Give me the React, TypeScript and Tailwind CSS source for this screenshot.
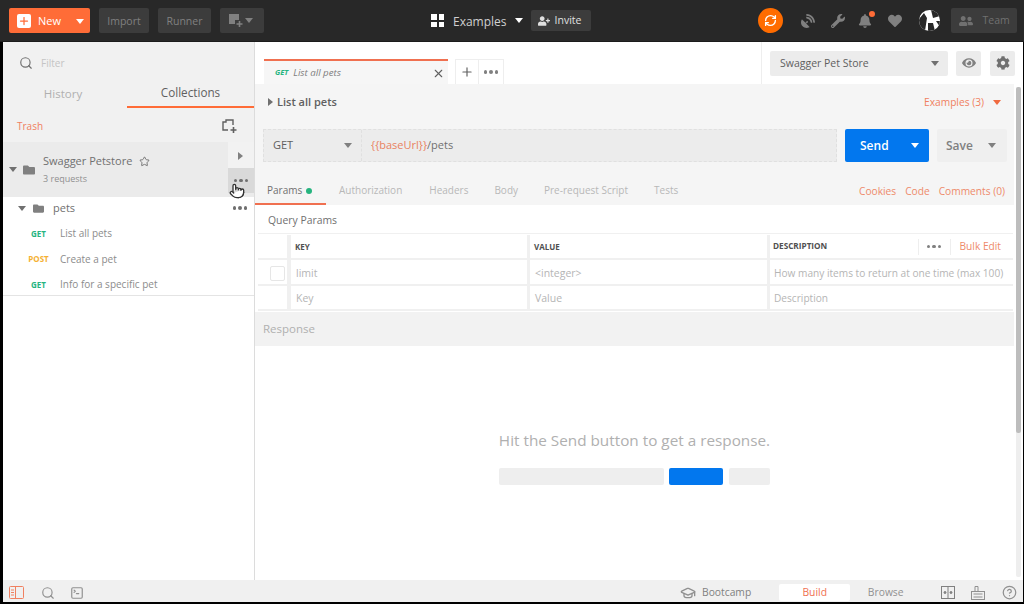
import React from "react";
import { Plus, Search, Star, X, Pointer, GraduationCap, CircleHelp, RefreshCw, SquareTerminal } from "lucide-react";
import { FaBell, FaCog, FaEye, FaFolder, FaHeart, FaSatelliteDish, FaUserFriends, FaUserPlus, FaWrench } from "react-icons/fa";

const Tri = ({ c = "border-t-white", dir = "down" }: { c?: string; dir?: string }) =>
  dir === "down" ? (
    <span className={`inline-block w-0 h-0 border-x-[4px] border-x-transparent border-t-[5px] ${c}`} />
  ) : (
    <span className={`inline-block w-0 h-0 border-y-[4px] border-y-transparent border-l-[5px] ${c}`} />
  );

const Dots = ({ c = "bg-[#707070]" }: { c?: string }) => (
  <span className="inline-flex gap-[2px]">
    <i className={`block w-[3.5px] h-[3.5px] rounded-full ${c}`} />
    <i className={`block w-[3.5px] h-[3.5px] rounded-full ${c}`} />
    <i className={`block w-[3.5px] h-[3.5px] rounded-full ${c}`} />
  </span>
);

const NewWin = ({ solid, cls }: { solid?: boolean; cls: string }) => (
  <svg width="16" height="15" viewBox="0 0 16 15" className={cls}>
    {solid ? (
      <path d="M1 1H11V7H7V11H1Z" fill="currentColor" />
    ) : (
      <path d="M6 11H1V3H4V1H11V6" fill="none" stroke="currentColor" strokeWidth="1.4" />
    )}
    <path d="M11.5 8V14M8.5 11H14.5" stroke="currentColor" strokeWidth="1.6" fill="none" />
  </svg>
);

const Req = ({ m, name, c }: { m: string; name: string; c: string }) => (
  <div className="flex items-center h-[25.5px]">
    <span className={`ml-[15px] w-[41px] text-center text-[8px] font-bold ${c}`}>{m}</span>
    <span className="ml-[1px] text-[10px] text-[#8c8c8c]">{name}</span>
  </div>
);

const Row = ({ k, v, d, pt, check, h }: { k: string; v: string; d: string; pt: string; check?: boolean; h: string }) => (
  <div className={`flex ${h} border-b-2 border-[#f0f0f0] text-[10.5px] text-[#b5b5b5]`}>
    <div className={`w-[33px] shrink-0 border-r-[4px] border-[#f0f0f0] flex items-center justify-center pl-[10px] ${pt}`}>
      {check && <span className="block w-[15px] h-[15px] rounded-[2px] border border-[#e6e6e6]" />}
    </div>
    <div className={`w-[239px] shrink-0 border-r-[3px] border-[#f0f0f0] pl-[5px] flex items-center ${pt}`}>{k}</div>
    <div className={`w-[240px] shrink-0 border-r-[3px] border-[#f0f0f0] pl-[5px] flex items-center ${pt}`}>{v}</div>
    <div className={`flex-1 pl-[4px] flex items-center whitespace-nowrap text-[10.15px] ${pt}`}>{d}</div>
  </div>
);

export default function App() {
  return (
    <div className="w-[1024px] h-[604px] overflow-hidden flex flex-col bg-black font-['Open_Sans',sans-serif]">
      {/* Header */}
      <header className="h-[42px] shrink-0 bg-[#282828] border-b border-[#1c1c1c] flex items-center pl-[9px]">
        <div className="w-[81px] h-[25px] rounded-[2px] bg-[#ff6c37] flex items-center pl-[8px] pt-[1px] text-[11px] text-white">
          <span className="w-[14px] h-[14px] bg-white rounded-[2px] flex items-center justify-center">
            <Plus size={12} strokeWidth={2.5} className="text-[#ff6c37]" />
          </span>
          <span className="ml-[7px]">New</span>
          <span className="ml-[15px] flex"><Tri /></span>
        </div>
        <div className="ml-[9px] w-[50px] h-[25px] pt-[2px] rounded-[2px] bg-[#3c3c3c] flex items-center justify-center text-[10.5px] text-[#808080]">Import</div>
        <div className="ml-[9px] w-[53px] h-[25px] pt-[2px] rounded-[2px] bg-[#3c3c3c] flex items-center justify-center text-[10.5px] text-[#808080]">Runner</div>
        <div className="ml-[9px] w-[44px] h-[25px] rounded-[2px] bg-[#3c3c3c] flex items-center pl-[8px] gap-[1px]">
          <NewWin solid cls="text-[#808080]" />
          <Tri c="border-t-[#808080]" />
        </div>
        <div className="ml-[167px] grid grid-cols-2 gap-[2px] w-[13px]">
          <i className="block h-[5.5px] bg-white" /><i className="block h-[5.5px] bg-white" />
          <i className="block h-[5.5px] bg-white" /><i className="block h-[5.5px] bg-white" />
        </div>
        <span className="ml-[9px] pt-[2px] text-[12px] text-[#d0d0d0]">Examples</span>
        <span className="ml-[8px] flex"><Tri /></span>
        <div className="ml-[8px] w-[60px] h-[21px] pt-[1px] rounded-[2px] bg-[#3c3c3c] flex items-center pl-[7px] gap-[5px] text-[10.5px] text-[#e0e0e0]">
          <FaUserPlus size={12} />Invite
        </div>
        <div className="ml-[167px] w-[25px] h-[25px] rounded-full bg-[#ff6c00] flex items-center justify-center">
          <RefreshCw size={13} strokeWidth={2.5} className="text-white" />
        </div>
        <FaSatelliteDish size={14} className="ml-[18px] text-[#808080]" />
        <FaWrench size={14} className="ml-[16px] text-[#808080]" />
        <span className="ml-[13px] relative flex">
          <FaBell size={14} className="text-[#808080]" />
          <i className="absolute -top-[3px] -right-[3px] w-[6px] h-[6px] rounded-full bg-[#ff6c37]" />
        </span>
        <FaHeart size={14} className="ml-[16px] text-[#808080]" />
        <span className="ml-[17px] w-[21px] h-[21px] rounded-full bg-white flex items-center justify-center overflow-hidden">
          <svg width="21" height="21" viewBox="0 0 21 21">
            <path d="M0 9 L5 3 L8 8 L6 21 L0 21Z M12 0 L14 8 L21 6 L21 0Z M9 13 L14 13 L16 21 L9 21Z M17 11 L21 11 L21 17Z" fill="#282828" />
          </svg>
        </span>
        <div className="ml-[11px] w-[66px] h-[25px] pt-[1px] rounded-[2px] bg-[#3c3c3c] flex items-center pl-[8px] gap-[10px] text-[10.5px] text-[#707070]">
          <FaUserFriends size={14} />Team
        </div>
      </header>

      <div className="flex-1 min-h-0 flex pl-[3px] pr-[1px] pb-[2px] bg-black">
        <div className="flex-1 min-w-0 flex flex-col bg-white">
          <div className="flex-1 min-h-0 flex">
            {/* Sidebar */}
            <aside className="w-[252px] shrink-0 bg-white border-r border-[#dcdcdc] flex flex-col">
              <div className="bg-[#f1f1f1] h-[100px] shrink-0">
                <div className="h-[36px] flex items-center pl-[16px] pt-[6px]">
                  <Search size={14} className="text-[#707070]" />
                  <span className="ml-[8px] text-[10px] text-[#c4c4c4]">Filter</span>
                </div>
                <div className="h-[30px] flex">
                  <div className="w-[124px] flex items-center justify-center text-[11.5px] text-[#b0b0b0] pr-[4px] pt-[1px]">History</div>
                  <div className="flex-1 flex items-center justify-center text-[11.7px] text-[#606060] border-b-2 border-[#ff6c37] pt-[1px]">Collections</div>
                </div>
                <div className="h-[34px] flex items-center justify-between pl-[14px] pr-[16px] pt-[2px]">
                  <span className="text-[10px] text-[#f08060]">Trash</span>
                  <NewWin cls="text-[#606060]" />
                </div>
              </div>
              <div className="h-[55px] shrink-0 bg-[#ebebeb] flex relative">
                <div className="flex-1 flex items-center">
                  <span className="ml-[6px] flex"><Tri c="border-t-[#707070]" /></span>
                  <FaFolder size={12} className="ml-[6px] text-[#808080]" />
                  <div className="ml-[8px]">
                    <div className="flex items-center text-[11px] text-[#707070] leading-[16px]">
                      Swagger Petstore
                      <Star size={11} className="ml-[7px] text-[#707070]" />
                    </div>
                    <div className="text-[9px] text-[#909090] mt-[3px]">3 requests</div>
                  </div>
                </div>
                <div className="w-[26px] flex flex-col">
                  <div className="h-[26px] bg-[#f2f2f2] flex items-center justify-center pr-[2px] pt-[1px]"><Tri dir="right" c="border-l-[#808080]" /></div>
                  <div className="h-[25px] bg-[#d9d9d9] flex items-center justify-center"><Dots /></div>
                </div>
                <Pointer size={16} className="absolute left-[226px] top-[41px] text-[#333] fill-white" />
              </div>
              <div className="h-[99px] shrink-0 border-b border-[#e4e4e4]">
                <div className="h-[24px] flex items-center pl-[15px] pr-[7px] pb-[2px]">
                  <Tri c="border-t-[#707070]" />
                  <FaFolder size={11} className="ml-[7px] text-[#808080]" />
                  <span className="ml-[9px] text-[11px] text-[#707070]">pets</span>
                  <span className="ml-auto flex"><Dots /></span>
                </div>
                <Req m="GET" name="List all pets" c="text-[#26b47f]" />
                <Req m="POST" name="Create a pet" c="text-[#f5b133]" />
                <Req m="GET" name="Info for a specific pet" c="text-[#26b47f]" />
              </div>
            </aside>

            {/* Main */}
            <main className="flex-1 min-w-0 flex flex-col">
              <div className="h-[42px] shrink-0 flex bg-white">
                <div className="flex-1 flex items-end pl-[9px]">
                  <div className="w-[184px] h-[25px] border-t-2 border-[#f07050] bg-[#f6f6f6] flex items-center pl-[11px] pr-[3px] pt-[1px] text-[9.7px] italic text-[#808080]">
                    <span className="font-bold text-[#26b47f] text-[7.5px] mr-[5px]">GET</span>List all pets
                    <X size={13} className="ml-auto not-italic text-[#606060]" />
                  </div>
                  <div className="ml-[7px] w-[24px] h-[25px] border border-b-0 border-[#eeeeee] flex items-center justify-center"><Plus size={14} className="text-[#606060]" /></div>
                  <div className="w-[25px] h-[25px] border border-l-0 border-b-0 border-[#eeeeee] flex items-center justify-center"><Dots c="bg-[#808080]" /></div>
                </div>
                <div className="w-[262px] border-l border-[#eeeeee] flex items-center pl-[8px]">
                  <div className="w-[178px] h-[25px] rounded-[2px] bg-[#ececec] flex items-center justify-between pl-[10px] pr-[9px] pt-[1px] text-[10.5px] text-[#606060]">
                    Swagger Pet Store<Tri c="border-t-[#707070]" />
                  </div>
                  <div className="ml-[8px] w-[25px] h-[25px] rounded-[2px] bg-[#ececec] flex items-center justify-center"><FaEye size={14} className="text-[#808080]" /></div>
                  <div className="ml-[9px] w-[25px] h-[25px] rounded-[2px] bg-[#ececec] flex items-center justify-center"><FaCog size={14} className="text-[#707070]" /></div>
                </div>
              </div>

              <div className="flex-1 min-h-0 flex">
                <div className="flex-1 min-w-0 flex flex-col">
                  <div className="h-[121px] shrink-0 bg-[#f5f5f5] flex flex-col">
                    <div className="h-[45px] shrink-0 flex items-start justify-between pl-[13px] pr-[13px] pt-[10px]">
                      <div className="flex items-center text-[11px] font-semibold text-[#606060]">
                        <Tri dir="right" c="border-l-[#707070]" />
                        <span className="ml-[4px]">List all pets</span>
                      </div>
                      <div className="flex items-center text-[10.2px] text-[#f08060] mt-[1px]">
                        Examples (3)<span className="ml-[9px] flex"><Tri c="border-t-[#f06a40]" /></span>
                      </div>
                    </div>
                    <div className="h-[33px] shrink-0 flex pl-[8px]">
                      <div className="w-[574px] h-[33px] bg-[#ececec] border border-dashed border-[#e0e0e0] flex items-center text-[11px]">
                        <div className="w-[98px] h-full border-r border-dashed border-[#e0e0e0] flex items-center justify-between pl-[9px] pr-[9px] text-[#606060]">
                          <span>GET</span><Tri c="border-t-[#808080]" />
                        </div>
                        <span className="ml-[9px] text-[#e9825f]">{"{{baseUrl}}"}</span><span className="text-[#707070]">/pets</span>
                      </div>
                      <div className="ml-[8px] w-[84px] h-[33px] rounded-[2px] bg-[#0277ee] flex items-center pl-[15px] text-[12px] font-semibold text-white">
                        Send<span className="ml-[22px] flex"><Tri /></span>
                      </div>
                      <div className="ml-[8px] w-[70px] h-[33px] rounded-[2px] bg-[#efefef] flex items-center pl-[9px] text-[12px] text-[#808080] font-semibold">
                        Save<span className="ml-[15px] flex"><Tri c="border-t-[#808080]" /></span>
                      </div>
                    </div>
                    <div className="flex-1 flex items-stretch text-[10px] text-[#b8b8b8]">
                      <div className="w-[71px] pl-[12px] flex items-center border-b-2 border-[#f07050] text-[#707070] pt-[16px]">
                        Params<i className="ml-[4px] w-[6px] h-[6px] rounded-full bg-[#26b47f]" />
                      </div>
                      <div className="ml-[13px] flex items-center pt-[14px]">Authorization</div>
                      <div className="ml-[27px] flex items-center pt-[14px]">Headers</div>
                      <div className="ml-[26px] flex items-center pt-[14px]">Body</div>
                      <div className="ml-[26px] flex items-center pt-[14px]">Pre-request Script</div>
                      <div className="ml-[26px] flex items-center pt-[14px]">Tests</div>
                      <div className="ml-auto mr-[9px] flex items-center gap-[9px] text-[10.2px] text-[#ee8a6a] pt-[16px]">
                        <span>Cookies</span><span>Code</span><span>Comments (0)</span>
                      </div>
                    </div>
                  </div>

                  <div className="h-[107px] shrink-0 bg-white pl-[3px] pr-[1px]">
                    <div className="h-[28px] flex items-center pl-[10px] text-[10.4px] text-[#707070] pt-[3px]">Query Params</div>
                    <div className="border-t border-[#f0f0f0] flex h-[27px] border-b-2 border-b-[#f0f0f0] text-[8px] font-bold text-[#505050] pt-[1px]">
                      <div className="w-[33px] shrink-0 border-r-[4px] border-[#f0f0f0]" />
                      <div className="w-[239px] shrink-0 border-r-[3px] border-[#f0f0f0] pl-[4px] flex items-center">KEY</div>
                      <div className="w-[240px] shrink-0 border-r-[3px] border-[#f0f0f0] pl-[4px] flex items-center">VALUE</div>
                      <div className="flex-1 pl-[3px] flex items-center text-[8.2px]">
                        DESCRIPTION
                        <span className="ml-auto h-[16px] border-x border-[#eeeeee] w-[33px] flex items-center justify-center"><Dots c="bg-[#808080]" /></span>
                        <span className="ml-[9px] mr-[12px] pt-[1px] text-[10.2px] font-normal text-[#ee8a6a]">Bulk Edit</span>
                      </div>
                    </div>
                    <Row k="limit" v="<integer>" d="How many items to return at one time (max 100)" pt="pt-[3px]" check h="h-[26px]" />
                    <Row k="Key" v="Value" d="Description" pt="pt-[2px]" h="h-[25px]" />
                  </div>

                  <div className="h-[34px] shrink-0 bg-[#f2f2f2] flex items-center pl-[8px] text-[11.5px] text-[#b0b0b0]">Response</div>

                  <div className="flex-1 bg-white flex flex-col items-center pt-[84px]">
                    <div className="text-[15.3px] text-[#b0b0b0] leading-[20px]">Hit the Send button to get a response.</div>
                    <div className="mt-[18px] flex">
                      <i className="block w-[165px] h-[17px] rounded-[2px] bg-[#eeeeee]" />
                      <i className="ml-[5px] block w-[54px] h-[17px] rounded-[2px] bg-[#0277ee]" />
                      <i className="ml-[6px] block w-[41px] h-[17px] rounded-[2px] bg-[#eeeeee]" />
                    </div>
                  </div>
                </div>
                {/* scrollbar */}
                <div className="w-[9px] shrink-0 pl-[2px] pr-[2px] pt-[3px] pb-[3px] bg-white">
                  <div className="h-full bg-[#eeeeee] rounded-[2px]">
                    <div className="h-[346px] bg-[#bdbdbd] rounded-[2px]" />
                  </div>
                </div>
              </div>
            </main>
          </div>

          {/* Footer */}
          <footer className="h-[22px] shrink-0 bg-[#f0f0f0] flex items-center pl-[6px] pt-[3px] text-[10.3px] text-[#808080]">
            <svg width="15" height="13" viewBox="0 0 15 13" fill="none" stroke="#f08060" strokeWidth="1" className="shrink-0">
              <rect x="0.5" y="0.5" width="14" height="12" rx="1" />
              <path d="M6.5 1V12M2 4H5M2 6.5H5M2 9H5" />
            </svg>
            <Search size={14} className="ml-[17px] text-[#909090]" />
            <SquareTerminal size={14} className="ml-[15px] text-[#909090]" />
            <GraduationCap size={16} className="ml-[596px] text-[#909090]" />
            <span className="ml-[6px]">Bootcamp</span>
            <div className="ml-[28px] w-[71px] h-[17px] rounded-[2px] bg-white flex items-center justify-center text-[#f07050]">Build</div>
            <div className="w-[71px] flex items-center justify-center text-[#909090]">Browse</div>
            <svg width="14" height="13" viewBox="0 0 14 13" fill="none" stroke="#808080" className="ml-[20px] shrink-0">
              <rect x="0.5" y="0.5" width="13" height="12" />
              <path d="M7 0.5V12.5" />
              <circle cx="4" cy="6.5" r="1" fill="#808080" />
              <circle cx="10" cy="6.5" r="1" fill="#808080" />
            </svg>
            <svg width="14" height="15" viewBox="0 0 14 15" fill="none" stroke="#909090" className="ml-[16px] shrink-0">
              <rect x="0.5" y="6.5" width="13" height="8" />
              <path d="M4 6V1.5H7V6M2.5 9H11.5M2.5 12H11.5" />
            </svg>
            <CircleHelp size={15} className="ml-[17px] text-[#909090]" />
          </footer>
        </div>
      </div>
    </div>
  );
}
